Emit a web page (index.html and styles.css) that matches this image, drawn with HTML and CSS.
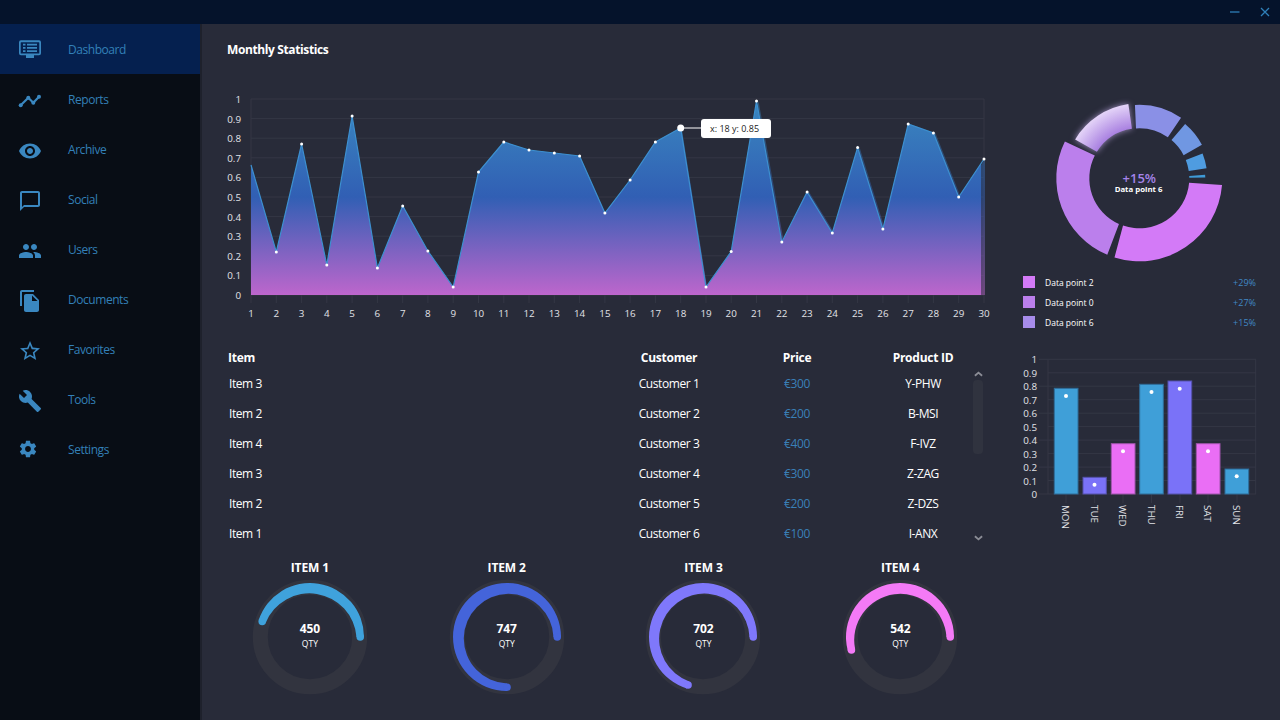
FILE: index.html
```html
<!DOCTYPE html>
<html lang="en">
<head>
  <meta charset="UTF-8">
  <meta name="viewport" content="width=device-width, initial-scale=1.0">
  <title>Dashboard</title>
  <link rel="stylesheet" href="styles.css">
</head>
<body>
  <header class="titlebar">
    <svg class="win-icon" viewBox="0 0 10 10"><path d="M0 5H9.500"/></svg>
    <svg class="win-icon" viewBox="0 0 10 10"><path d="M1 1L9 9M9 1L1 9"/></svg>
  </header>

  <div class="app">
    <nav class="sidebar">
      <a class="nav-item active">
        <svg class="nav-icon" viewBox="0 0 24 24"><path fill-rule="evenodd" d="M3 1.300h18a2 2 0 0 1 2 2v11a2 2 0 0 1-2 2h-5v2.700H8v-2.700H3a2 2 0 0 1-2-2v-11a2 2 0 0 1 2-2zM3.200 3.200a.5.5 0 0 0-.5.5v10.200a.5.5 0 0 0 .5.5h17.600a.5.5 0 0 0 .5-.5V3.700a.5.5 0 0 0-.5-.5zM5 4.800h2.500v1.800H5zM9 4.800h10v1.800H9zM5 8h2.500v1.800H5zM9 8h10v1.800H9zM5 11.200h2.500V13H5zM9 11.200h10V13H9z"/></svg>
        <span>Dashboard</span>
      </a>
      <a class="nav-item">
        <svg class="nav-icon" viewBox="0 0 24 24"><path class="nav-line" d="M2.700 16.300L10.300 8.700L15.300 13.700L21 7.700"/><circle cx="2.700" cy="16.300" r="2"/><circle cx="10.300" cy="8.700" r="2"/><circle cx="15.300" cy="13.700" r="2"/><circle cx="21" cy="7.700" r="2"/></svg>
        <span>Reports</span>
      </a>
      <a class="nav-item">
        <svg class="nav-icon" viewBox="0 0 24 24"><path d="M12 4.500C7 4.500 2.730 7.610 1 12c1.730 4.390 6 7.500 11 7.500s9.270-3.110 11-7.500c-1.730-4.390-6-7.500-11-7.500zM12 17c-2.760 0-5-2.240-5-5s2.240-5 5-5 5 2.240 5 5-2.240 5-5 5zm0-8c-1.660 0-3 1.340-3 3s1.340 3 3 3 3-1.340 3-3-1.340-3-3-3z"/></svg>
        <span>Archive</span>
      </a>
      <a class="nav-item">
        <svg class="nav-icon" viewBox="0 0 24 24"><path d="M20 2H4c-1.100 0-2 .9-2 2v18l4-4h14c1.100 0 2-.9 2-2V4c0-1.100-.9-2-2-2zm0 14H6l-2 2V4h16v12z"/></svg>
        <span>Social</span>
      </a>
      <a class="nav-item">
        <svg class="nav-icon" viewBox="0 0 24 24"><path d="M16 11c1.660 0 2.990-1.340 2.990-3S17.660 5 16 5c-1.660 0-3 1.340-3 3s1.340 3 3 3zm-8 0c1.660 0 2.990-1.340 2.990-3S9.660 5 8 5C6.340 5 5 6.340 5 8s1.340 3 3 3zm0 2c-2.330 0-7 1.170-7 3.500V19h14v-2.500c0-2.330-4.670-3.500-7-3.500zm8 0c-.29 0-.62.02-.97.05 1.160.84 1.970 1.970 1.970 3.450V19h6v-2.500c0-2.330-4.670-3.500-7-3.500z"/></svg>
        <span>Users</span>
      </a>
      <a class="nav-item">
        <svg class="nav-icon" viewBox="0 0 24 24"><path d="M16 1H4c-1.100 0-2 .9-2 2v14h2V3h12V1zm-1 4l6 6v10c0 1.100-.9 2-2 2H7.990C6.890 23 6 22.100 6 21l.01-14c0-1.100.89-2 1.990-2h7zm-1 7h5.500L14 6.500V12z"/></svg>
        <span>Documents</span>
      </a>
      <a class="nav-item">
        <svg class="nav-icon" viewBox="0 0 24 24"><path d="M22 9.240l-7.190-.62L12 2 9.190 8.630 2 9.240l5.460 4.730L5.820 21 12 17.270 18.180 21l-1.630-7.030L22 9.240zM12 15.400l-3.760 2.270 1-4.280-3.320-2.880 4.380-.38L12 6.100l1.710 4.040 4.380.38-3.320 2.880 1 4.280L12 15.400z"/></svg>
        <span>Favorites</span>
      </a>
      <a class="nav-item">
        <svg class="nav-icon" viewBox="0 0 24 24"><path d="M22.700 19l-9.100-9.100c.9-2.300.4-5-1.500-6.900-2-2-5-2.400-7.400-1.300L9 6 6 9 1.600 4.700C.4 7.100.9 10.100 2.900 12.100c1.900 1.900 4.600 2.400 6.900 1.500l9.100 9.100c.4.4 1 .4 1.400 0l2.300-2.300c.5-.4.5-1.100.1-1.400z"/></svg>
        <span>Tools</span>
      </a>
      <a class="nav-item">
        <svg class="nav-icon nav-icon-small" viewBox="0 0 24 24"><path d="M19.430 12.980c.04-.32.07-.64.07-.98s-.03-.66-.07-.98l2.110-1.650c.19-.15.24-.42.12-.64l-2-3.460c-.12-.22-.39-.3-.61-.22l-2.490 1c-.52-.4-1.080-.73-1.690-.98l-.38-2.650C14.460 2.180 14.250 2 14 2h-4c-.25 0-.46.18-.49.42l-.38 2.650c-.61.25-1.170.59-1.690.98l-2.490-1c-.23-.09-.49 0-.61.22l-2 3.460c-.13.22-.07.49.12.64l2.110 1.650c-.04.32-.07.65-.07.98s.03.66.07.98l-2.110 1.650c-.19.15-.24.42-.12.64l2 3.460c.12.22.39.3.61.22l2.490-1c.52.4 1.080.73 1.690.98l.38 2.650c.03.24.24.42.49.42h4c.25 0 .46-.18.49-.42l.38-2.650c.61-.25 1.170-.59 1.690-.98l2.490 1c.23.09.49 0 .61-.22l2-3.460c.12-.22.07-.49-.12-.64l-2.110-1.650zM12 15.500c-1.930 0-3.500-1.570-3.500-3.500s1.570-3.500 3.500-3.500 3.500 1.570 3.500 3.500-1.570 3.500-3.500 3.500z"/></svg>
        <span>Settings</span>
      </a>
    </nav>

    <main class="content">
      <section class="left">
        <h1 class="page-title">Monthly Statistics</h1>

        <!-- viewBox is in window pixels, easier to read the values off -->
        <svg class="area-chart" viewBox="220 85 780 240">
          <defs>
            <linearGradient id="areaFill" gradientUnits="userSpaceOnUse" x1="0" y1="99" x2="0" y2="295">
              <stop offset="0" stop-color="#3a88c0"/>
              <stop offset="0.5" stop-color="#315fb4"/>
              <stop offset="1" stop-color="#bd66cc"/>
            </linearGradient>
          </defs>
          <g class="grid">
            <path d="M251 99H984M251 118.600H984M251 138.200H984M251 157.800H984M251 177.400H984M251 197H984M251 216.600H984M251 236.200H984M251 255.800H984M251 275.400H984M251 295H984"/>
            <path d="M251 99V303M984 99V303M276.300 295V303M301.600 295V303M326.800 295V303M352.100 295V303M377.400 295V303M402.700 295V303M427.900 295V303M453.200 295V303M478.500 295V303M503.800 295V303M529 295V303M554.300 295V303M579.600 295V303M604.900 295V303M630.100 295V303M655.400 295V303M680.700 295V303M706 295V303M731.200 295V303M756.500 295V303M781.800 295V303M807.100 295V303M832.300 295V303M857.600 295V303M882.900 295V303M908.200 295V303M933.400 295V303M958.700 295V303"/>
          </g>
          <polygon class="area-ghost" fill="url(#areaFill)" points="604.900,295 604.900,213 631.100,180 656.400,142 681.700,128 707,287 732.200,251.500 758.500,101 783.800,242 809.100,192 834.300,233 859.600,147.500 884.900,229 910.200,124 935.400,133 960.700,197 985,159 985,295"/>
          <polygon fill="url(#areaFill)" points="251,295 251,165 276.300,252 301.600,144 326.800,265 352.100,116 377.400,268 402.700,206 427.900,251 453.200,287 478.500,172 503.800,142 529,150 554.300,153 579.600,156 604.900,213 630.100,180 655.400,142 680.700,128 706,287 731.200,251.500 756.500,101 781.800,242 807.100,192 832.300,233 857.600,147.500 882.900,229 908.200,124 933.400,133 958.700,197 981,163.500 981,295"/>
          <polyline class="area-line" points="251,165 276.300,252 301.600,144 326.800,265 352.100,116 377.400,268 402.700,206 427.900,251 453.200,287 478.500,172 503.800,142 529,150 554.300,153 579.600,156 604.900,213 630.100,180 655.400,142 680.700,128 706,287 731.200,251.500 756.500,101 781.800,242 807.100,192 832.300,233 857.600,147.500 882.900,229 908.200,124 933.400,133 958.700,197 984,159"/>
          <g class="dots">
            <circle cx="276.300" cy="252" r="1.500"/><circle cx="301.600" cy="144" r="1.500"/><circle cx="326.800" cy="265" r="1.500"/><circle cx="352.100" cy="116" r="1.500"/><circle cx="377.400" cy="268" r="1.500"/><circle cx="402.700" cy="206" r="1.500"/><circle cx="427.900" cy="251" r="1.500"/><circle cx="453.200" cy="287" r="1.500"/><circle cx="478.500" cy="172" r="1.500"/><circle cx="503.800" cy="142" r="1.500"/><circle cx="529" cy="150" r="1.500"/><circle cx="554.300" cy="153" r="1.500"/><circle cx="579.600" cy="156" r="1.500"/><circle cx="604.900" cy="213" r="1.500"/><circle cx="630.100" cy="180" r="1.500"/><circle cx="655.400" cy="142" r="1.500"/><circle cx="706" cy="287" r="1.500"/><circle cx="731.200" cy="251.500" r="1.500"/><circle cx="756.500" cy="101" r="1.500"/><circle cx="781.800" cy="242" r="1.500"/><circle cx="807.100" cy="192" r="1.500"/><circle cx="832.300" cy="233" r="1.500"/><circle cx="857.600" cy="147.500" r="1.500"/><circle cx="882.900" cy="229" r="1.500"/><circle cx="908.200" cy="124" r="1.500"/><circle cx="933.400" cy="133" r="1.500"/><circle cx="958.700" cy="197" r="1.500"/><circle cx="984" cy="159" r="1.500"/>
          </g>
          <g class="tick y-tick">
            <text x="241" y="103">1</text><text x="241" y="122.600">0.9</text><text x="241" y="142.200">0.8</text><text x="241" y="161.800">0.7</text><text x="241" y="181.400">0.6</text><text x="241" y="201">0.5</text><text x="241" y="220.600">0.4</text><text x="241" y="240.200">0.3</text><text x="241" y="259.800">0.2</text><text x="241" y="279.400">0.1</text><text x="241" y="299">0</text>
          </g>
          <g class="tick x-tick">
            <text x="251" y="317">1</text><text x="276.300" y="317">2</text><text x="301.600" y="317">3</text><text x="326.800" y="317">4</text><text x="352.100" y="317">5</text><text x="377.400" y="317">6</text><text x="402.700" y="317">7</text><text x="427.900" y="317">8</text><text x="453.200" y="317">9</text><text x="478.500" y="317">10</text><text x="503.800" y="317">11</text><text x="529" y="317">12</text><text x="554.300" y="317">13</text><text x="579.600" y="317">14</text><text x="604.900" y="317">15</text><text x="630.100" y="317">16</text><text x="655.400" y="317">17</text><text x="680.700" y="317">18</text><text x="706" y="317">19</text><text x="731.200" y="317">20</text><text x="756.500" y="317">21</text><text x="781.800" y="317">22</text><text x="807.100" y="317">23</text><text x="832.300" y="317">24</text><text x="857.600" y="317">25</text><text x="882.900" y="317">26</text><text x="908.200" y="317">27</text><text x="933.400" y="317">28</text><text x="958.700" y="317">29</text><text x="984" y="317">30</text>
          </g>
          <!-- hover tooltip for x=18 -->
          <path class="tip-line" d="M680.700 128H702"/>
          <circle class="tip-dot" cx="680.700" cy="128" r="3.500"/>
          <rect class="tip-box" x="701" y="119" width="70" height="19" rx="3"/>
          <text class="tip-text" x="734.500" y="131.500">x: 18 y: 0.85</text>
        </svg>

        <div class="table-wrap">
          <div class="row head">
            <span class="cell-item">Item</span><span>Customer</span><span>Price</span><span>Product ID</span>
          </div>
          <div class="row"><span class="cell-item">Item 3</span><span>Customer 1</span><span class="price">€300</span><span>Y-PHW</span></div>
          <div class="row"><span class="cell-item">Item 2</span><span>Customer 2</span><span class="price">€200</span><span>B-MSI</span></div>
          <div class="row"><span class="cell-item">Item 4</span><span>Customer 3</span><span class="price">€400</span><span>F-IVZ</span></div>
          <div class="row"><span class="cell-item">Item 3</span><span>Customer 4</span><span class="price">€300</span><span>Z-ZAG</span></div>
          <div class="row"><span class="cell-item">Item 2</span><span>Customer 5</span><span class="price">€200</span><span>Z-DZS</span></div>
          <div class="row"><span class="cell-item">Item 1</span><span>Customer 6</span><span class="price">€100</span><span>I-ANX</span></div>
          <div class="scrollbar">
            <svg class="scroll-arrow" viewBox="0 0 10 6"><path d="M1 5L5 1.500L9 5"/></svg>
            <div class="scroll-thumb"></div>
            <svg class="scroll-arrow scroll-down" viewBox="0 0 10 6"><path d="M1 1L5 4.500L9 1"/></svg>
          </div>
        </div>

        <div class="gauges">
          <div class="gauge">
            <div class="gauge-title">ITEM 1</div>
            <div class="gauge-ring">
              <svg viewBox="-60 -60 120 120">
                <circle class="ring-bg" r="49.700"/>
                <g class="c-blue"><path d="M-51.360 -16.690A54 54 0 0 1 54 0L46.500 0A47.200 47.200 0 0 0 -44.230 -14.370Z"/><circle cx="-47.790" cy="-15.530" r="3.750"/><circle cx="50.250" r="3.750"/></g>
              </svg>
              <div class="gauge-label"><b>450</b><small>QTY</small></div>
            </div>
          </div>
          <div class="gauge">
            <div class="gauge-title">ITEM 2</div>
            <div class="gauge-ring">
              <svg viewBox="-60 -60 120 120">
                <circle class="ring-bg" r="49.700"/>
                <g class="c-indigo"><path d="M0 54A54 54 0 1 1 54 0L46.500 0A44.860 44.860 0 1 0 0 46.500Z"/><circle cy="50.250" r="3.750"/><circle cx="50.250" r="3.750"/></g>
              </svg>
              <div class="gauge-label"><b>747</b><small>QTY</small></div>
            </div>
          </div>
          <div class="gauge">
            <div class="gauge-title">ITEM 3</div>
            <div class="gauge-ring">
              <svg viewBox="-60 -60 120 120">
                <circle class="ring-bg" r="49.700"/>
                <g class="c-violet"><path d="M-16.060 51.560A54 54 0 1 1 54 0L46.500 0A45.200 45.200 0 1 0 -13.830 44.400Z"/><circle cx="-14.940" cy="47.980" r="3.750"/><circle cx="50.250" r="3.750"/></g>
              </svg>
              <div class="gauge-label"><b>702</b><small>QTY</small></div>
            </div>
          </div>
          <div class="gauge">
            <div class="gauge-title">ITEM 4</div>
            <div class="gauge-ring">
              <svg viewBox="-60 -60 120 120">
                <circle class="ring-bg" r="49.700"/>
                <g class="c-pink"><path d="M-52.160 13.980A54 54 0 1 1 54 0L46.500 0A46.200 46.200 0 1 0 -44.920 12.030Z"/><circle cx="-48.540" cy="13" r="3.750"/><circle cx="50.250" r="3.750"/></g>
              </svg>
              <div class="gauge-label"><b>542</b><small>QTY</small></div>
            </div>
          </div>
        </div>
      </section>

      <aside class="right">
        <svg class="donut" viewBox="-134.300 -83.300 275 175">
          <defs>
            <radialGradient id="sliceGlow" gradientUnits="userSpaceOnUse" cx="0" cy="0" r="75">
              <stop offset="0.66" stop-color="#a77ee0"/>
              <stop offset="1" stop-color="#e4d4f8"/>
            </radialGradient>
          </defs>
          <path fill="#d37af7" d="M82.730 6.660A83 83 0 0 1 -24.820 79.200L-16.280 47.280A50 50 0 0 0 49.810 4.360Z"/>
          <path fill="#bb7fec" d="M-32.030 76.570A83 83 0 0 1 -74.410 -36.780L-44.470 -22.850A50 50 0 0 0 -20.340 45.680Z"/>
          <path class="slice-active" fill="url(#sliceGlow)" d="M-64.160 -38.850A75 75 0 0 1 -10.960 -74.200L-7.390 -49.450A50 50 0 0 0 -42.400 -26.500Z"/>
          <path fill="#8a90e6" d="M-4.360 -73.370A73.500 73.500 0 0 1 41.730 -60.500L28.540 -41.060A50 50 0 0 0 -3.310 -49.890Z"/>
          <path fill="#7097e2" d="M45.830 -54.230A71 71 0 0 1 62.630 -33.440L44.310 -23.170A50 50 0 0 0 32.200 -38.250Z"/>
          <path fill="#4f9ce0" d="M63.270 -24.920A68 68 0 0 1 67.270 -9.930L49.450 -7.390A50 50 0 0 0 46.490 -18.410Z"/>
          <path fill="#3f9ad6" d="M49.900 -2.400L65.800 -3.600L66 -.9L50 -.5Z"/>
          <text class="donut-pct" x="0" y="4.500">+15%</text>
          <text class="donut-name" x="-0.800" y="13.500">Data point 6</text>
        </svg>

        <ul class="legend">
          <li><i class="swatch s1"></i><span>Data point 2</span><em>+29%</em></li>
          <li><i class="swatch s2"></i><span>Data point 0</span><em>+27%</em></li>
          <li><i class="swatch s3"></i><span>Data point 6</span><em>+15%</em></li>
        </ul>

        <svg class="bar-chart" viewBox="1005 345 275 195">
          <g class="grid">
            <path d="M1039 359.300H1256M1048 372.800H1256M1039 386.200H1256M1048 399.700H1256M1039 413.200H1256M1048 426.600H1256M1039 440.100H1256M1048 453.600H1256M1039 467.100H1256M1048 480.500H1256M1039 494H1256"/>
            <path d="M1048 359.300V494M1255.700 359.300V494M1066 494V503M1094.700 494V503M1123 494V503M1151.500 494V503M1180 494V503M1208 494V503M1237 494V503"/>
          </g>
          <rect class="bar b-blue" x="1054.300" y="388.300" width="23.700" height="105.700"/>
          <rect class="bar b-violet" x="1083" y="477.300" width="23.300" height="16.700"/>
          <rect class="bar b-pink" x="1111.300" y="443.700" width="23.700" height="50.300"/>
          <rect class="bar b-blue" x="1139.700" y="384.300" width="23.600" height="109.700"/>
          <rect class="bar b-violet" x="1168" y="381" width="23.700" height="113"/>
          <rect class="bar b-pink" x="1196.300" y="443.700" width="23.700" height="50.300"/>
          <rect class="bar b-blue" x="1225" y="469" width="23.700" height="25"/>
          <g class="bar-dots">
            <circle cx="1066" cy="396" r="2"/><circle cx="1094.500" cy="484.700" r="2"/><circle cx="1123" cy="451.300" r="2"/><circle cx="1151.500" cy="392" r="2"/><circle cx="1179.700" cy="388.700" r="2"/><circle cx="1208" cy="451.300" r="2"/><circle cx="1236.700" cy="476.300" r="2"/>
          </g>
          <g class="tick y-tick">
            <text x="1037" y="363.300">1</text><text x="1037" y="376.800">0.9</text><text x="1037" y="390.200">0.8</text><text x="1037" y="403.700">0.7</text><text x="1037" y="417.200">0.6</text><text x="1037" y="430.600">0.5</text><text x="1037" y="444.100">0.4</text><text x="1037" y="457.600">0.3</text><text x="1037" y="471.100">0.2</text><text x="1037" y="484.500">0.1</text><text x="1037" y="498">0</text>
          </g>
          <g class="tick day-tick">
            <text transform="translate(1062 505) rotate(90)">MON</text>
            <text transform="translate(1090.500 505) rotate(90)">TUE</text>
            <text transform="translate(1118.500 505) rotate(90)">WED</text>
            <text transform="translate(1147.500 505) rotate(90)">THU</text>
            <text transform="translate(1176 505) rotate(90)">FRI</text>
            <text transform="translate(1204 505) rotate(90)">SAT</text>
            <text transform="translate(1232.500 505) rotate(90)">SUN</text>
          </g>
        </svg>
      </aside>
    </main>
  </div>
</body>
</html>
```

FILE: styles.css
```css
* {
  box-sizing: border-box;
}
body {
  font-family: "Open Sans", "Liberation Sans", sans-serif;
  background-color: #282b39;
  color: #fff;
  margin: 0;
  height: 720px;
  overflow: hidden;
}
.titlebar {
  height: 24px;
  background-color: #05132b;
  display: flex;
  justify-content: flex-end;
  align-items: center;
  gap: 20px;
  padding-right: 10.500px;
}
.win-icon {
  width: 10px;
  height: 10px;
  fill: none;
  stroke: #2f7fb8;
  stroke-width: 1.300;
}
.app {
  display: flex;
  height: 696px;
}
.sidebar {
  width: 202px;
  flex: none;
  background-color: #080d15;
  border-right: 2px solid #1e212c;
}
.nav-item {
  display: flex;
  align-items: center;
  height: 50px;
  padding-left: 18px;
  color: #3380b8;
  font-size: 12px;
  letter-spacing: -0.45px;
}
.nav-item.active {
  background-color: #05204f;
}
.nav-icon {
  width: 24px;
  height: 24px;
  flex: none;
  fill: #3a87c0;
  margin: 4px 26px 0 0;
}
.nav-icon-small {
  width: 20px;
  height: 20px;
  margin-right: 30px;
  margin-top: 0;
}
.nav-line {
  fill: none;
  stroke: #3a87c0;
  stroke-width: 2.200;
}
.content {
  flex: 1;
  display: flex;
}
.left {
  width: 803px;
  flex: none;
}
.page-title {
  margin: 0;
  height: 50px;
  padding-left: 25px;
  font-size: 12px;
  font-weight: 700;
  line-height: 51px;
  letter-spacing: -0.38px;
}
.area-chart {
  display: block;
  width: 780px;
  height: 240px;
  margin: 11px 0 0 18px;
}
.grid path {
  fill: none;
  stroke: #343745;
  stroke-width: 1;
}
.area-ghost {
  opacity: 0.45;
}
.area-line {
  fill: none;
  stroke: #3d90d0;
  stroke-width: 1.200;
}
.dots circle,
.bar-dots circle {
  fill: #fff;
}
.tick text {
  fill: #e2e3e8;
  font-size: 9.800px;
}
.y-tick text {
  text-anchor: end;
}
.x-tick text {
  text-anchor: middle;
}
.tip-line {
  stroke: #fff;
  stroke-width: 1;
}
.tip-dot,
.tip-box {
  fill: #fff;
}
.tip-text {
  fill: #222;
  font-size: 9px;
  text-anchor: middle;
}
.table-wrap {
  position: relative;
  margin: 21px 0 0 0;
}
.row {
  display: grid;
  grid-template-columns: 402px 130px 126px 126px;
  height: 30px;
  align-items: center;
  font-size: 12px;
  letter-spacing: -0.42px;
  text-align: center;
}
.row.head {
  height: 22px;
  font-weight: 700;
  letter-spacing: -0.25px;
}
.cell-item {
  text-align: left;
  padding-left: 27px;
}
.head .cell-item {
  padding-left: 26px;
}
.price {
  color: #3a80b8;
}
.scrollbar {
  position: absolute;
  left: 771px;
  top: 23px;
  width: 10px;
  height: 174px;
  display: flex;
  flex-direction: column;
  align-items: center;
}
.scroll-arrow {
  width: 9px;
  height: 6px;
  flex: none;
  margin-top: 2px;
  fill: none;
  stroke: #8b8d96;
  stroke-width: 2;
}
.scroll-thumb {
  width: 10px;
  height: 74px;
  margin-top: 3px;
  border-radius: 4px;
  background-color: #30333f;
}
.scroll-down {
  margin-top: auto;
  margin-bottom: 2px;
}
.gauges {
  display: flex;
  margin: 10px 0 0 9.500px;
}
.gauge {
  width: 196.800px;
  text-align: center;
}
.gauge-title {
  height: 19px;
  font-size: 12px;
  font-weight: 700;
  line-height: 20px;
  letter-spacing: -0.1px;
}
.gauge-ring {
  position: relative;
  width: 120px;
  height: 120px;
  margin: 0 auto;
}
.gauge-ring svg {
  display: block;
}
.ring-bg {
  fill: none;
  stroke: #32343f;
  stroke-width: 15;
}
.c-blue { fill: #3fa2dc; }
.c-indigo { fill: #4464da; }
.c-violet { fill: #7f78fb; }
.c-pink { fill: #f47af6; }
.gauge-label {
  position: absolute;
  inset: 0;
  display: flex;
  flex-direction: column;
  align-items: center;
  justify-content: center;
  padding-bottom: 4px;
}
.gauge-label b {
  font-size: 12px;
  line-height: 16px;
  letter-spacing: -0.1px;
}
.gauge-label small {
  font-size: 8.500px;
  line-height: 13px;
}
.right {
  flex: 1;
  padding-top: 71px;
}
.donut {
  display: block;
  width: 275px;
  height: 175px;
}
.slice-active {
  filter: drop-shadow(0 0 3px rgba(205, 180, 245, 0.7));
}
.donut-pct {
  fill: #a584ea;
  font-size: 13px;
  font-weight: 600;
  text-anchor: middle;
}
.donut-name {
  fill: #fff;
  font-size: 7.800px;
  font-weight: 700;
  text-anchor: middle;
}
.legend {
  list-style: none;
  margin: 6px 0 0;
  padding: 0 24px 0 18px;
}
.legend li {
  display: flex;
  align-items: center;
  height: 12px;
  margin-bottom: 8px;
  font-size: 8.500px;
}
.legend span {
  margin-left: 10px;
  flex: 1;
}
.legend em {
  font-style: normal;
  font-size: 9px;
  color: #4088c4;
}
.swatch {
  width: 12px;
  height: 12px;
  flex: none;
}
.s1 { background-color: #d37af7; }
.s2 { background-color: #bb7fec; }
.s3 { background-color: #a78ceb; }
.bar-chart {
  display: block;
  width: 275px;
  height: 195px;
  margin-top: 17px;
}
.bar {
  stroke-width: 1;
}
.b-blue { fill: #3f9fd8; stroke: #2f6d99; }
.b-violet { fill: #7a72f8; stroke: #5552ad; }
.b-pink { fill: #ea6ef5; stroke: #9f55ab; }
```
